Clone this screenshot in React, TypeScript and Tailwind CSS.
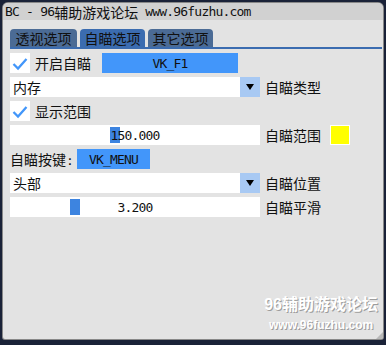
import React from 'react'

const mono = "font-['DejaVu_Sans_Mono',monospace] text-[13px] tracking-[-0.8px]"
const cjk = "font-['Noto_Sans_CJK_SC',sans-serif] text-[14px]"

function Check() {
  return (
    <div className="w-[20px] h-[20px] bg-white shrink-0">
      <svg width="20" height="20" viewBox="0 0 20 20">
        <polyline
          points="3.5,11 8,15.5 16.5,6"
          fill="none"
          stroke="#4296fa"
          strokeWidth="2.3"
        />
      </svg>
    </div>
  )
}

function Combo({ value, label }: { value: string; label: string }) {
  return (
    <div className="flex items-center h-[20px]">
      <div className={`w-[230px] h-[20px] bg-white flex items-center pl-[3px] leading-none text-[#111] ${cjk}`}>
        {value}
      </div>
      <div className="w-[20px] h-[20px] bg-[#a8c9f3] flex items-center justify-center">
        <svg width="8" height="6" viewBox="0 0 8 6">
          <polygon points="0,0 8,0 4,6" fill="#000" />
        </svg>
      </div>
      <span className={`ml-[5px] leading-none text-[#111] ${cjk}`}>{label}</span>
    </div>
  )
}

function Slider({ value, pos, label, children }: { value: string; pos: number; label: string; children?: React.ReactNode }) {
  return (
    <div className="flex items-center h-[20px]">
      <div className="relative w-[250px] h-[20px] bg-white flex items-center justify-center">
        <div className="absolute top-[2px] w-[10px] h-[16px] bg-[#3d84e0]" style={{ left: pos }} />
        <span className={`relative leading-none text-[#111] ${mono}`}>{value}</span>
      </div>
      <span className={`ml-[5px] leading-none text-[#111] ${cjk}`}>{label}</span>
      {children}
    </div>
  )
}

export default function App() {
  return (
    <div className="w-[386px] h-[345px] bg-[#1a2238] pt-[2px] pl-[2px] overflow-hidden">
      <div className="relative w-[382px] h-[338px] bg-[#e3e3e3] border border-black/40 rounded-t-[6px] rounded-b-[3px] overflow-hidden">
        <div className="h-[17px] bg-[#d1d1d1] pl-[2px] flex items-center text-[#111] leading-none whitespace-nowrap">
          <span className={mono}>BC - 96</span>
          <span className={cjk}>辅助游戏论坛</span>
          <span className={`${mono} ml-[7px]`}>www.96fuzhu.com</span>
        </div>

        <div className="pl-[7px] pr-[1px] pt-[9px]">
          <div className="flex gap-[3px]">
            <div className={`h-[18px] w-[67px] rounded-t-[4px] bg-[#4b6b95] flex items-center justify-center leading-none text-[#111] ${cjk}`}>透视选项</div>
            <div className={`h-[18px] w-[65px] rounded-t-[4px] bg-[#3b6cb0] flex items-center justify-center leading-none text-[#111] ${cjk}`}>自瞄选项</div>
            <div className={`h-[18px] w-[65px] rounded-t-[4px] bg-[#4b6b95] flex items-center justify-center leading-none text-[#111] ${cjk}`}>其它选项</div>
          </div>
          <div className="h-[2px] bg-[#3b6cb0]" />

          <div className="mt-[4px] flex flex-col gap-[4px]">
            <div className="flex items-center h-[20px]">
              <Check />
              <span className={`ml-[5px] w-[67px] leading-none text-[#111] ${cjk}`}>开启自瞄</span>
              <div className={`w-[136px] h-[20px] bg-[#4296fa] flex items-center justify-center leading-none text-[#111] ${mono}`}>VK_F1</div>
            </div>

            <Combo value="内存" label="自瞄类型" />

            <div className="flex items-center h-[20px]">
              <Check />
              <span className={`ml-[5px] leading-none text-[#111] ${cjk}`}>显示范围</span>
            </div>

            <Slider value="150.000" pos={100} label="自瞄范围">
              <div className="ml-[9px] w-[20px] h-[20px] bg-[#ffff00] border border-white" />
            </Slider>

            <div className="flex items-center h-[20px]">
              <span className={`w-[67px] leading-none text-[#111] whitespace-nowrap ${cjk}`}>
                自瞄按键<span className={mono}>:</span>
              </span>
              <div className={`w-[73px] h-[20px] bg-[#4296fa] flex items-center justify-center leading-none text-[#111] ${mono}`}>VK_MENU</div>
            </div>

            <Combo value="头部" label="自瞄位置" />

            <Slider value="3.200" pos={60} label="自瞄平滑" />
          </div>
        </div>

        <div className="absolute top-[292px] right-[5px] flex flex-col items-center text-white [text-shadow:1px_1px_0_#9c9c9c] whitespace-nowrap">
          <div className="leading-[16px] font-bold text-[16px]">
            <span className="font-['Liberation_Sans',sans-serif]">96</span>
            <span className="font-['Noto_Sans_CJK_SC',sans-serif]">辅助游戏论坛</span>
          </div>
          <div className="mt-[5px] leading-[14px] font-bold text-[12px] font-['Liberation_Sans',sans-serif]">www.96fuzhu.com</div>
        </div>

        <div className="absolute right-0 bottom-0 w-0 h-0 border-l-[7px] border-l-transparent border-b-[7px] border-b-[#b8b8b8]" />
      </div>
    </div>
  )
}
